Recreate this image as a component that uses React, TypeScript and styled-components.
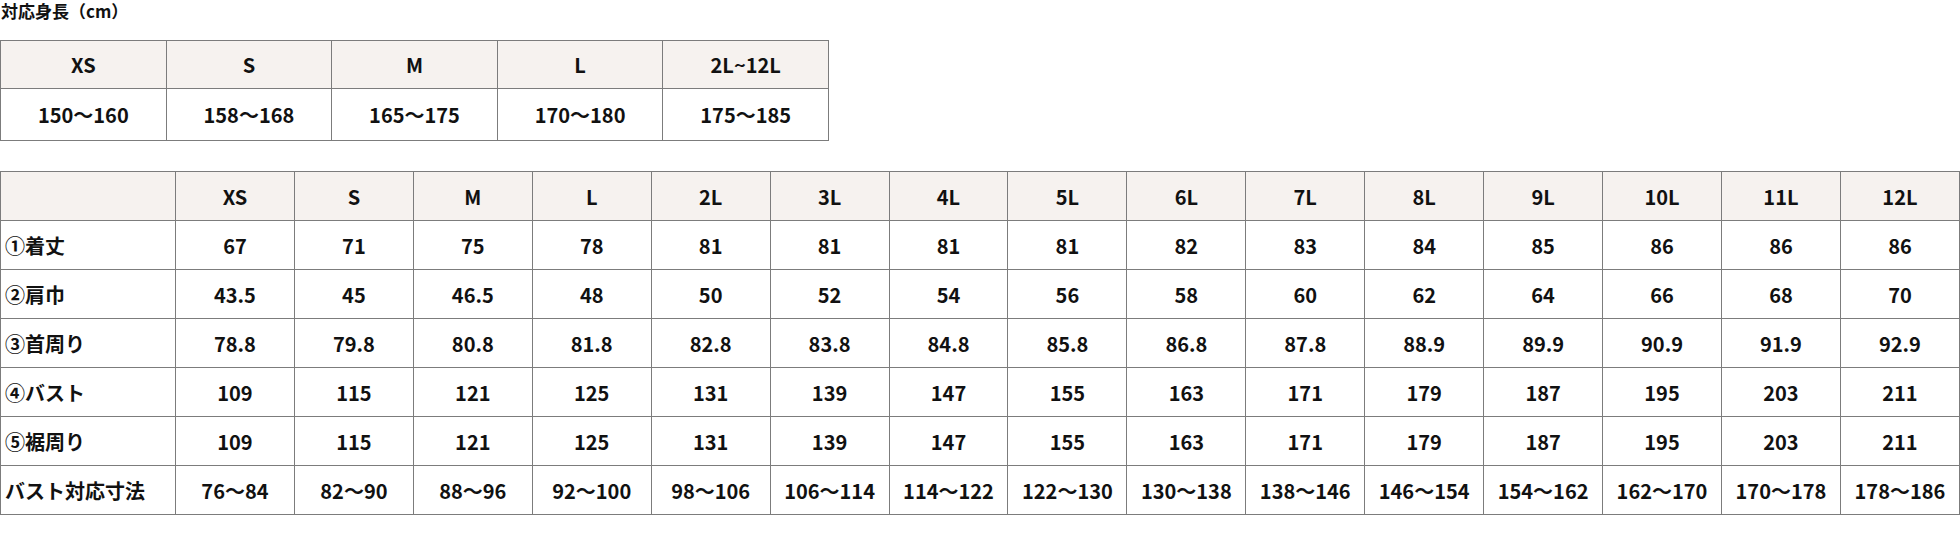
import React from "react";
import styled, { createGlobalStyle } from "styled-components";

const GlobalStyle = createGlobalStyle`
  html, body {
    margin: 0;
    padding: 0;
    background: #ffffff;
  }
  body {
    font-family: "Noto Sans CJK JP", "Noto Sans", sans-serif;
    color: #111111;
  }
`;

const Page = styled.div`
  display: flex;
  flex-direction: column;
  align-items: flex-start;
  width: 1960px;
`;

const Title = styled.h3`
  margin: 0;
  padding-left: 1px;
  font-size: 17px;
  line-height: 22px;
  font-weight: 700;
  color: #111111;
`;

const Table = styled.table<{ $width: number; $mt: number }>`
  border-collapse: collapse;
  table-layout: fixed;
  width: ${(p) => p.$width}px;
  margin-top: ${(p) => p.$mt}px;
`;

const Row = styled.tr<{ $h: number }>`
  height: ${(p) => p.$h}px;
`;

const Head = styled.th<{ $w?: number }>`
  background: #f6f2ef;
  border: 1px solid #7c7c7c;
  padding: 0;
  font-size: 20px;
  font-weight: 700;
  text-align: center;
  vertical-align: middle;
  color: #111111;
  ${(p) => (p.$w ? `width: ${p.$w}px;` : "")}
`;

const Cell = styled.td`
  border: 1px solid #7c7c7c;
  padding: 0;
  font-size: 20px;
  font-weight: 700;
  text-align: center;
  vertical-align: middle;
  color: #111111;
  white-space: nowrap;
`;

const Label = styled(Cell)`
  text-align: left;
  padding-left: 4px;
`;

const heightSizes = ["XS", "S", "M", "L", "2L~12L"];
const heightValues = ["150〜160", "158〜168", "165〜175", "170〜180", "175〜185"];

const sizes = ["XS", "S", "M", "L", "2L", "3L", "4L", "5L", "6L", "7L", "8L", "9L", "10L", "11L", "12L"];

const rows: { label: string; values: string[] }[] = [
  { label: "①着丈", values: ["67", "71", "75", "78", "81", "81", "81", "81", "82", "83", "84", "85", "86", "86", "86"] },
  { label: "②肩巾", values: ["43.5", "45", "46.5", "48", "50", "52", "54", "56", "58", "60", "62", "64", "66", "68", "70"] },
  { label: "③首周り", values: ["78.8", "79.8", "80.8", "81.8", "82.8", "83.8", "84.8", "85.8", "86.8", "87.8", "88.9", "89.9", "90.9", "91.9", "92.9"] },
  { label: "④バスト", values: ["109", "115", "121", "125", "131", "139", "147", "155", "163", "171", "179", "187", "195", "203", "211"] },
  { label: "⑤裾周り", values: ["109", "115", "121", "125", "131", "139", "147", "155", "163", "171", "179", "187", "195", "203", "211"] },
  {
    label: "バスト対応寸法",
    values: ["76〜84", "82〜90", "88〜96", "92〜100", "98〜106", "106〜114", "114〜122", "122〜130", "130〜138", "138〜146", "146〜154", "154〜162", "162〜170", "170〜178", "178〜186"],
  },
];

export default function App() {
  return (
    <>
      <GlobalStyle />
      <Page>
        <Title>対応身長（cm）</Title>
        <Table $width={829} $mt={18}>
          <tbody>
            <Row $h={48}>
              {heightSizes.map((s) => (
                <Head key={s}>{s}</Head>
              ))}
            </Row>
            <Row $h={52}>
              {heightValues.map((v) => (
                <Cell key={v}>{v}</Cell>
              ))}
            </Row>
          </tbody>
        </Table>
        <Table $width={1960} $mt={30}>
          <tbody>
            <Row $h={49}>
              <Head $w={174} />
              {sizes.map((s) => (
                <Head key={s}>{s}</Head>
              ))}
            </Row>
            {rows.map((r) => (
              <Row $h={49} key={r.label}>
                <Label>{r.label}</Label>
                {r.values.map((v, i) => (
                  <Cell key={i}>{v}</Cell>
                ))}
              </Row>
            ))}
          </tbody>
        </Table>
      </Page>
    </>
  );
}
